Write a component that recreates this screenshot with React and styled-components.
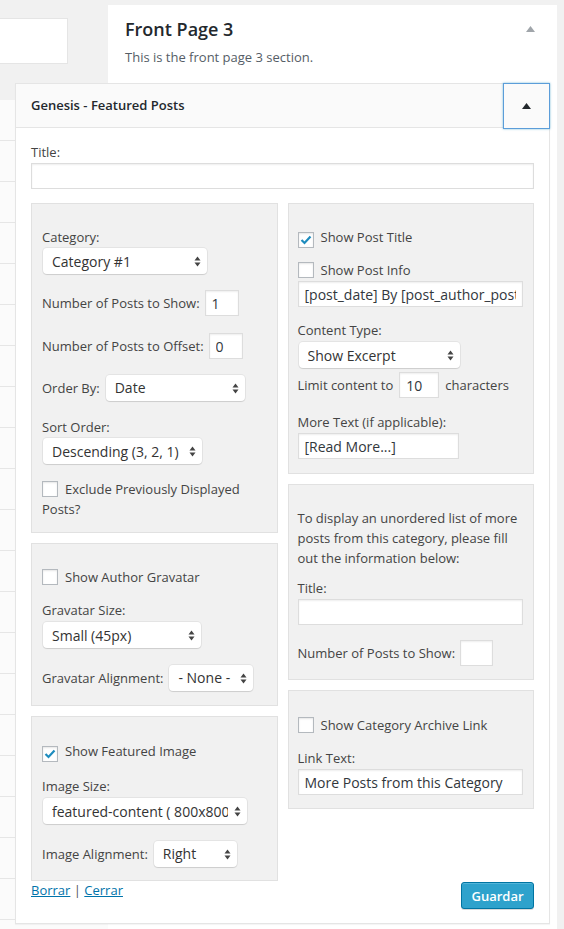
import React from 'react';
import styled, { createGlobalStyle } from 'styled-components';

const GlobalStyle = createGlobalStyle`
  html, body {
    margin: 0;
    padding: 0;
    background: #f1f1f1;
  }
  body {
    font-family: "Open Sans", "Liberation Sans", sans-serif;
    font-size: 13px;
    color: #444;
  }
  * { box-sizing: border-box; }
`;

const Page = styled.div`
  display: flex;
  align-items: flex-start;
  width: 564px;
  height: 929px;
  overflow: hidden;
`;

const LeftPane = styled.div`
  width: 108px;
  flex-shrink: 0;
  padding-top: 18px;
`;

const SearchBox = styled.div`
  width: 68px;
  height: 46px;
  background: #fff;
  border: 1px solid #e5e5e5;
  border-left: none;
`;

const RowList = styled.div`
  margin-top: 36px;
`;

const ListRow = styled.div`
  height: 41px;
  background: #fbfbfb;
  border-bottom: 1px solid #e6e6e6;
`;

const Sidebar = styled.div`
  width: 449px;
  flex-shrink: 0;
  margin-top: 5px;
  min-height: 924px;
  background: #fff;
`;

const SectionHead = styled.div`
  display: flex;
  justify-content: space-between;
  align-items: flex-start;
  padding: 12px 22px 17px 17px;
`;

const SectionTitle = styled.div`
  font-size: 18px;
  line-height: 24px;
  font-weight: 600;
  color: #23282d;
`;

const SectionDesc = styled.div`
  margin-top: 7px;
  font-size: 13px;
  line-height: 18px;
  color: #555d66;
`;

const CaretSvg = styled.svg`
  display: block;
  margin-top: ${(p) => p.$mt || 0}px;
`;

const Caret = ({ color, mt }) => (
  <CaretSvg $mt={mt} width="9" height="6" viewBox="0 0 9 6">
    <path d="M0 6 L4.5 0 L9 6 Z" fill={color} />
  </CaretSvg>
);

const Widget = styled.div`
  position: relative;
  margin-left: -93px;
  width: 535px;
  background: #fff;
  border: 1px solid #e5e5e5;
  box-shadow: 0 1px 1px rgba(0, 0, 0, 0.04);
`;

const WidgetTop = styled.div`
  display: flex;
  align-items: center;
  justify-content: space-between;
  height: 44px;
  background: #fafafa;
  border-bottom: 1px solid #e5e5e5;
  padding-left: 15px;
`;

const WidgetTitle = styled.div`
  font-size: 13px;
  font-weight: 600;
  color: #23282d;
  margin-top: -1px;
`;

const Toggle = styled.div`
  display: flex;
  align-items: center;
  justify-content: center;
  width: 47px;
  height: 46px;
  margin: -1px -1px -2px 0;
  background: #fafafa;
  border: 1px solid #5b9dd9;
  box-shadow: 0 0 2px rgba(30, 140, 190, 0.6);
`;

const WidgetBody = styled.div`
  padding: 14px 15px 14px;
`;

const Label = styled.div`
  line-height: 20px;
  margin-top: ${(p) => p.$mt || 0}px;
`;

const Input = styled.input`
  display: block;
  width: ${(p) => (p.$w ? `${p.$w}px` : '100%')};
  height: 26px;
  margin: ${(p) => p.$mt || 0}px 0 0;
  padding: 0 6px;
  background: #fff;
  border: 1px solid #ddd;
  border-radius: 0;
  box-shadow: inset 0 1px 2px rgba(0, 0, 0, 0.07);
  font-family: "Open Sans", "Liberation Sans", sans-serif;
  font-size: 14px;
  color: #32373c;
  outline: none;
  flex-shrink: 0;
`;

const Columns = styled.div`
  display: grid;
  grid-template-columns: 1fr 1fr;
  column-gap: 10px;
  align-items: start;
  margin-top: 14px;
`;

const Column = styled.div`
  display: flex;
  flex-direction: column;
  gap: 10px;
`;

const Box = styled.div`
  background: #f1f1f1;
  border: 1px solid #e1e1e1;
  padding: ${(p) => p.$pt || 23}px 10px ${(p) => p.$pb || 13}px ${(p) => p.$pl || 10}px;
`;

const Row = styled.div`
  display: flex;
  align-items: center;
  gap: ${(p) => p.$gap || 5}px;
  margin-top: ${(p) => p.$mt || 0}px;
  white-space: nowrap;
  line-height: 20px;
`;

const SelectBox = styled.div`
  display: flex;
  align-items: center;
  gap: 6px;
  flex-shrink: 0;
  width: ${(p) => p.$w}px;
  height: 26px;
  margin-top: ${(p) => p.$mt || 0}px;
  margin-left: 1px;
  padding: 0 6px 0 9px;
  background: #fff;
  border-radius: 4px;
  box-shadow: 0 0 0 1px rgba(0, 0, 0, 0.05), 0 1px 1px rgba(0, 0, 0, 0.1);
  font-size: 14px;
  color: #333;
  white-space: nowrap;
`;

const SelectText = styled.span`
  flex: 1;
  overflow: hidden;
`;

const Arrows = () => (
  <svg width="7" height="11" viewBox="0 0 7 11" style={{ flexShrink: 0 }}>
    <path d="M0.5 4.5 L3.5 0.5 L6.5 4.5 Z M0.5 6.5 L3.5 10.5 L6.5 6.5 Z" fill="#444" />
  </svg>
);

const Select = ({ w, mt, children }) => (
  <SelectBox $w={w} $mt={mt}>
    <SelectText>{children}</SelectText>
    <Arrows />
  </SelectBox>
);

const CheckRow = styled.div`
  line-height: 20px;
  margin-top: ${(p) => p.$mt || 0}px;
`;

const CheckSquare = styled.span`
  display: inline-flex;
  align-items: center;
  justify-content: center;
  width: 16px;
  height: 16px;
  margin-right: 7px;
  vertical-align: -3px;
  background: #fff;
  border: 1px solid #b4b9be;
  box-shadow: inset 0 1px 2px rgba(0, 0, 0, 0.1);
`;

const Check = ({ checked }) => (
  <CheckSquare>
    {checked && (
      <svg width="12" height="10" viewBox="0 0 12 10">
        <path d="M1.5 5 L4.5 8 L10.5 1.5" fill="none" stroke="#1e8cbe" strokeWidth="2.2" />
      </svg>
    )}
  </CheckSquare>
);

const Para = styled.div`
  line-height: 20px;
`;

const Footer = styled.div`
  display: flex;
  justify-content: space-between;
  align-items: flex-start;
`;

const Links = styled.div`
  line-height: 18px;
  color: #555;

  a {
    color: #0073aa;
    text-decoration: underline;
  }
`;

const SaveButton = styled.button`
  margin-top: 1px;
  width: 73px;
  height: 27px;
  padding: 0;
  background: #2ea2cc;
  border: 1px solid #0074a2;
  border-radius: 3px;
  box-shadow: inset 0 1px 0 rgba(120, 200, 230, 0.5), 0 1px 0 rgba(0, 0, 0, 0.15);
  color: #fff;
  font-family: "Open Sans", "Liberation Sans", sans-serif;
  font-size: 13px;
  font-weight: 600;
`;

export default function App() {
  return (
    <>
      <GlobalStyle />
      <Page>
        <LeftPane>
          <SearchBox />
          <RowList>
            {Array.from({ length: 21 }).map((_, i) => (
              <ListRow key={i} />
            ))}
          </RowList>
        </LeftPane>
        <Sidebar>
          <SectionHead>
            <div>
              <SectionTitle>Front Page 3</SectionTitle>
              <SectionDesc>This is the front page 3 section.</SectionDesc>
            </div>
            <Caret color="#a0a5aa" mt={9} />
          </SectionHead>
          <Widget>
            <WidgetTop>
              <WidgetTitle>Genesis - Featured Posts</WidgetTitle>
              <Toggle>
                <Caret color="#23282d" />
              </Toggle>
            </WidgetTop>
            <WidgetBody>
              <Label>Title:</Label>
              <Input $mt={1} defaultValue="" />
              <Columns>
                <Column>
                  <Box $pb={13}>
                    <Label>Category:</Label>
                    <Select w={164} mt={1}>Category #1</Select>
                    <Row $mt={16}>
                      Number of Posts to Show:
                      <Input $w={34} defaultValue="1" />
                    </Row>
                    <Row $mt={17}>
                      Number of Posts to Offset:
                      <Input $w={34} defaultValue="0" />
                    </Row>
                    <Row $mt={16} $gap={5}>
                      Order By:
                      <Select w={139}>Date</Select>
                    </Row>
                    <Label $mt={16}>Sort Order:</Label>
                    <Select w={159} mt={1}>Descending (3, 2, 1)</Select>
                    <CheckRow $mt={15}>
                      <Check />
                      Exclude Previously Displayed Posts?
                    </CheckRow>
                  </Box>
                  <Box $pb={14}>
                    <CheckRow>
                      <Check />
                      Show Author Gravatar
                    </CheckRow>
                    <Label $mt={13}>Gravatar Size:</Label>
                    <Select w={158} mt={2}>Small (45px)</Select>
                    <Row $mt={17}>
                      Gravatar Alignment:
                      <Select w={84}>- None -</Select>
                    </Row>
                  </Box>
                  <Box $pt={24} $pb={13}>
                    <CheckRow>
                      <Check checked />
                      Show Featured Image
                    </CheckRow>
                    <Label $mt={14}>Image Size:</Label>
                    <Select w={204} mt={2}>featured-content ( 800x800 )</Select>
                    <Row $mt={17}>
                      Image Alignment:
                      <Select w={83}>Right</Select>
                    </Row>
                  </Box>
                </Column>
                <Column>
                  <Box $pb={14} $pl={9}>
                    <CheckRow>
                      <Check checked />
                      Show Post Title
                    </CheckRow>
                    <CheckRow $mt={12}>
                      <Check />
                      Show Post Info
                    </CheckRow>
                    <Input $mt={1} defaultValue="[post_date] By [post_author_posts_link] [post_comments]" />
                    <Label $mt={13}>Content Type:</Label>
                    <Select w={161} mt={2}>Show Excerpt</Select>
                    <Row $mt={4} $gap={6}>
                      Limit content to
                      <Input $w={40} defaultValue="10" />
                      characters
                    </Row>
                    <Label $mt={14}>More Text (if applicable):</Label>
                    <Input $w={161} $mt={1} defaultValue="[Read More...]" />
                  </Box>
                  <Box $pb={13} $pl={9}>
                    <Para>
                      To display an unordered list of more posts from this category, please fill out the
                      information below:
                    </Para>
                    <Label $mt={10}>Title:</Label>
                    <Input $mt={1} defaultValue="" />
                    <Row $mt={15}>
                      Number of Posts to Show:
                      <Input $w={33} defaultValue="" />
                    </Row>
                  </Box>
                  <Box $pt={24} $pb={13} $pl={9}>
                    <CheckRow>
                      <Check />
                      Show Category Archive Link
                    </CheckRow>
                    <Label $mt={13}>Link Text:</Label>
                    <Input $mt={1} defaultValue="More Posts from this Category" />
                  </Box>
                </Column>
              </Columns>
              <Footer>
                <Links>
                  <a href="#borrar">Borrar</a> | <a href="#cerrar">Cerrar</a>
                </Links>
                <SaveButton type="button">Guardar</SaveButton>
              </Footer>
            </WidgetBody>
          </Widget>
        </Sidebar>
      </Page>
    </>
  );
}
